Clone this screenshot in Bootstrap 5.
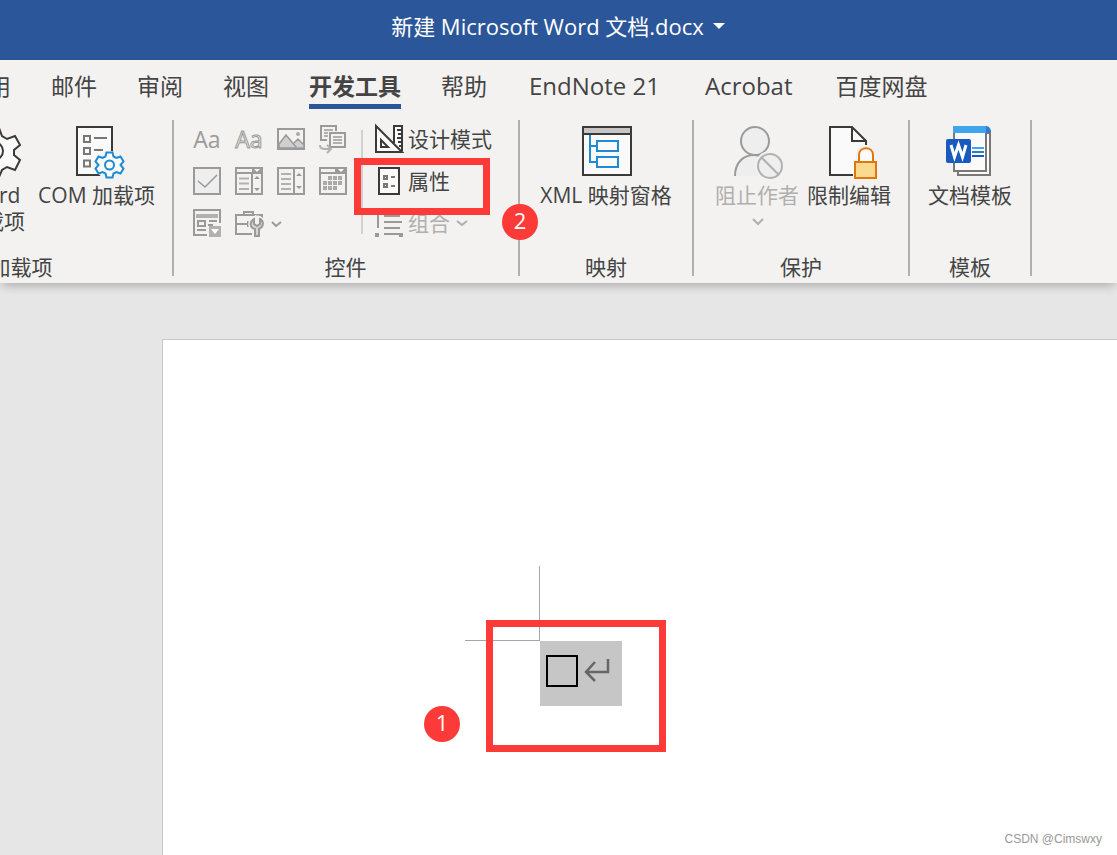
<!DOCTYPE html>
<html lang="zh-CN">
<head>
<meta charset="utf-8">
<meta name="viewport" content="width=device-width, initial-scale=1">
<title>新建 Microsoft Word 文档.docx</title>
<link href="https://cdn.jsdelivr.net/npm/bootstrap@5.3.0/dist/css/bootstrap.min.css" rel="stylesheet">
<style>
:root { --ink:#444; --edge:#3b3a39; --dim:#9a9a9a; --off:#b1afad; --blue:#2b579a; --accent:#1e8bd4; --alert:#fc3a38; }
body { font-family:"Open Sans","Noto Sans CJK SC",sans-serif; color:var(--ink); background:#e6e6e6; overflow-x:hidden; }
svg { display:block; flex:none; overflow:visible; }
button { background:none; border:0; padding:0; color:inherit; }
.titlebar { background:var(--blue); height:60px; font-size:22px; line-height:28px; padding-bottom:8px; }
.ribbon { background:#f3f2f0; box-shadow:0 4px 10px -2px rgba(0,0,0,.28); z-index:1; }
.tabs { gap:40px; margin-left:-35px; height:60px; font-size:23px; line-height:32px; white-space:nowrap; }
.tabs a { color:var(--ink); text-decoration:none; padding-top:10px; height:49px; }
.tabs a.active { font-weight:700; border-bottom:5px solid var(--blue); }
.tabs .latin { padding-left:2px; padding-right:3px; font-size:24px; }
.groups { margin-left:-130px; padding-bottom:7px; font-size:21px; line-height:26px; white-space:nowrap; }
.group { border-right:2px solid #b2b0ae; height:156px; flex:none; }
.caption-line { line-height:18px; }
.g-addins { width:304px; }
.addins { gap:13px; padding-right:17px; }
.g-controls { width:346px; padding-left:19px; }
.g-map { width:174px; }
.g-protect { width:216px; }
.g-template { width:122px; }
.big { padding-top:5px; }
.big svg.pic { margin-bottom:5px; }
.off, .off:disabled { color:var(--off); }
.picker { display:grid; grid-template-columns:repeat(4,28px); gap:14px; padding-top:5px; }
.glyph, .glyph:disabled { font-size:23px; line-height:28px; height:28px; color:var(--dim); }
.glyph.hollow { color:#f3f2f0; -webkit-text-stroke:1px var(--dim); }
.rule { width:2px; height:104px; background:#d2d0ce; margin:10px 12px 0 14px; }
.cmds { gap:14px; padding-top:5px; }
.cmds button { height:28px; gap:5px; }
.frame { position:absolute; border:7px solid var(--alert); pointer-events:none; z-index:2; }
.bubble { position:absolute; width:36px; height:36px; background:var(--alert); color:#fff; font-size:22px; line-height:32px; z-index:3; }
.frame-prop { left:-21px; top:-9px; width:136px; height:57px; }
.bubble-2 { right:-20px; top:84px; }
.sheet { background:#fff; border:solid #c6c6c6; border-width:1px 0 0 1px; margin:56px 0 0 162px; padding:226px 0 102px 302px; }
.corner { width:75px; height:75px; border:solid #a5a5a5; border-width:0 1px 1px 0; }
.picked { width:82px; height:65px; background:#c6c6c6; margin-top:75px; padding:0 12px 5px 6px; }
.picked input { appearance:none; width:32px; height:32px; border:2px solid #000; margin:0; }
.frame-doc { left:21px; top:54px; width:180px; height:132px; }
.bubble-1 { left:-41px; top:140px; }
.credit { position:absolute; right:15px; bottom:7px; font:12px/18px "Liberation Sans",sans-serif; color:#999; }
</style>
</head>
<body class="d-flex flex-column min-vh-100">
<header class="titlebar d-flex justify-content-center align-items-center text-white">
  <button class="d-flex align-items-center gap-2">新建 Microsoft Word 文档.docx
    <svg width="14" height="8" viewBox="0 0 14 8"><path d="M1 1h12l-6 6z" fill="#fff"/></svg></button>
</header>

<div class="ribbon position-relative">
  <div class="overflow-hidden">
  <nav class="tabs d-flex">
    <a href="#">引用</a><a href="#">邮件</a><a href="#">审阅</a><a href="#">视图</a><a href="#" class="active">开发工具</a><a href="#">帮助</a><a href="#" class="latin">EndNote 21</a><a href="#" class="latin">Acrobat</a><a href="#">百度网盘</a>
  </nav>
  <div class="groups d-flex">
    <section class="group g-addins d-flex flex-column justify-content-between">
      <div class="addins d-flex justify-content-end align-items-start">
        <button class="big d-flex flex-column align-items-center">
          <svg class="pic" width="52" height="52" viewBox="0 0 52 52" fill="#fafafa" stroke="#3b3a39" stroke-width="2"><path d="M20 3h11l3 8 5 3 8-3 5 9-6 5v5l6 5-5 10-8-3-5 3-3 7H20l-2-7-5-3-8 3-5-9 6-6v-5l-6-5 5-9 8 3 5-3z"/><circle cx="26" cy="26" r="9"/></svg>
          <span>Word</span><span>加载项</span>
        </button>
        <button class="big d-flex flex-column align-items-center">
          <svg class="pic" width="52" height="52" viewBox="0 0 52 52" fill="none" stroke-width="2"><path d="M6 2h35v48H6z" fill="#fafafa" stroke="#3b3a39"/><path d="M13 11h6v6h-6zM13 23h6v6h-6zM13 35.500h6v6h-6zM23 13h13M23 25h9" stroke="#797775"/><circle cx="38.500" cy="40" r="14" fill="#f3f2f0"/><path d="M35.500 27.500h6l1 4 3 1.500 4-1.500 3 5-3 3.500 3 3.500-3 5-4-1.500-3 1.500-1 4h-6l-1-4-3-1.500-4 1.500-3-5 3-3.500-3-3.500 3-5 4 1.500 3-1.500z" fill="#fafafa" stroke="#1e8bd4"/><circle cx="38.500" cy="40" r="4.500" stroke="#1e8bd4"/></svg>
          <span>COM 加载项</span>
        </button>
      </div>
      <div class="caption-line text-center">加载项</div>
    </section>

    <section class="group g-controls d-flex flex-column justify-content-between position-relative">
      <div class="d-flex">
        <div class="picker">
          <button disabled class="glyph" aria-label="格式文本">Aa</button>
          <button disabled class="glyph hollow" aria-label="纯文本">Aa</button>
          <button disabled aria-label="图片"><svg width="28" height="28" viewBox="0 0 28 28" fill="none" stroke="#9a9a9a" stroke-width="2"><path d="M1 4h26v20H1z"/><path d="M2 19l7-9 11 13H2zM17 18l4-4 6 6v3h-6" fill="#cfcfcf" stroke-width="1.500"/><circle cx="21" cy="9" r="2" fill="#aaa" stroke="none"/></svg></button>
          <button disabled aria-label="构建基块库"><svg width="28" height="28" viewBox="0 0 28 28" fill="none" stroke="#9a9a9a" stroke-width="2"><path d="M8 15H2V1h15v5"/><path d="M11 8h15v14H11z"/><path d="M5 5h9M5 8h4M5 11h4M14 12h9M14 15h9M14 18h9" stroke-width="1.500"/><path d="M1 20c0 4 2 4 10 4M8 20l4 4-4 4" stroke="#b1b1b1"/></svg></button>
          <button disabled aria-label="复选框"><svg width="28" height="28" viewBox="0 0 28 28" fill="#eee" stroke="#9a9a9a" stroke-width="2"><path d="M1 1h26v26H1z"/><path d="m5 14 7 6L24 8" fill="none" stroke-width="1.500"/></svg></button>
          <button disabled aria-label="组合框"><svg width="28" height="28" viewBox="0 0 28 28" fill="none" stroke="#9a9a9a" stroke-width="2"><path d="M1 1h26v26H1zM1 6h26M17 6v21"/><path d="M4 11.500h10M4 16.500h10M4 22h10" stroke="#b1b1b1"/><path d="M17 1h10v5H17zM19 12l3-3 3 3zM19 21l3 3 3-3z" fill="#9a9a9a" stroke="none"/><path d="m19 2 3 3 3-3z" fill="#fff" stroke="none"/></svg></button>
          <button disabled aria-label="下拉列表"><svg width="28" height="28" viewBox="0 0 28 28" fill="none" stroke="#9a9a9a" stroke-width="2"><path d="M1 1h26v26H1zM17 1v26"/><path d="M4 7h10M4 12h10M4 17h10M4 22h10" stroke="#b1b1b1"/><path d="m19 9 3-3 3 3zM19 19l3 3 3-3z" fill="#9a9a9a" stroke="none"/></svg></button>
          <button disabled aria-label="日期选取器"><svg width="28" height="28" viewBox="0 0 28 28" fill="none" stroke="#9a9a9a" stroke-width="2"><path d="M1 1h26v26H1zM1 6h26"/><path d="M17 1h10v5H17z" fill="#9a9a9a"/><path d="m19 2 3 3 3-3z" fill="#fff" stroke="none"/><path d="M9 11h14M4 16h19M4 21h14" stroke="#aaa" stroke-width="4" stroke-dasharray="4 1"/></svg></button>
          <button disabled aria-label="重复分区"><svg width="28" height="28" viewBox="0 0 28 28" fill="none" stroke="#9a9a9a" stroke-width="2"><path d="M14 26H1V1h26v13M4 21h9M16 12h8" stroke-width="2"/><path d="M3 7h22" stroke="#b1b1b1" stroke-width="4"/><path d="M5 12h7v5H5zM15 16h5"/><path d="M16 17h12v11H16z" fill="#b1b1b1" stroke="none"/><path d="M18 20h8l-4 5z" fill="#fff" stroke="none"/></svg></button>
          <button disabled aria-label="旧式工具"><svg width="28" height="28" viewBox="0 0 28 28" fill="none" stroke="#9a9a9a" stroke-width="2"><path d="M9 6V3h9v3M27 9V6H1v19h16M1 15h11M13 12v6"/><path d="M19 10c-5 3-4 9 1 10v7h4v-7c5-2 5-8 1-10v5l-3 2-3-2z" fill="#d5d5d5" stroke="#f3f2f0" stroke-width="5"/><path d="M19 10c-5 3-4 9 1 10v7h4v-7c5-2 5-8 1-10v5l-3 2-3-2z" fill="#d5d5d5"/></svg></button>
          <svg width="28" height="28" viewBox="0 0 28 28" fill="none" stroke="#9a9a9a" stroke-width="2"><path d="m-5 13 4 4 5-4"/></svg>
        </div>
        <div class="rule"></div>
        <div class="cmds d-flex flex-column align-items-start">
          <button class="d-flex align-items-center"><svg width="28" height="28" viewBox="0 0 28 28" fill="#fafafa" stroke="#3b3a39" stroke-width="2"><path d="M19 18V1h8v25M27 5h-5M27 9h-4M27 13h-5M27 17h-4M27 21h-3"/><path d="M1 1v26h26z"/><path d="M6 15v7h7z"/></svg>设计模式</button>
          <div class="position-relative"><button class="d-flex align-items-center"><svg width="28" height="28" viewBox="0 0 28 28" fill="none" stroke-width="2"><path d="M4 1h20v26H4z" fill="#fafafa" stroke="#3b3a39"/><path d="M9 9h3v3H9zM9 17h3v3H9zM16 10h4M16 19h4" stroke="#797775"/></svg>属性</button><div class="frame frame-prop"></div></div>
          <button disabled class="off d-flex align-items-center"><svg width="28" height="28" viewBox="0 0 28 28" fill="none" stroke="#9a9a9a" stroke-width="2"><path d="M3 2v17M3 3h6M9 7h16M9 13h18M9 19h16M9 25h15"/><path d="M0 24h4v4H0zM24 24h4v4h-4z" fill="#9a9a9a" stroke="none"/></svg>组合<svg width="14" height="12" viewBox="0 0 14 12" fill="none" stroke="#b1afad" stroke-width="2"><path d="m2 4 5 4 5-4"/></svg></button>
        </div>
      </div>
      <div class="caption-line text-center pe-3 me-1">控件</div>
      <div class="bubble bubble-2 rounded-circle text-center">2</div>
    </section>

    <section class="group g-map d-flex flex-column justify-content-between align-items-center">
      <button class="big d-flex flex-column align-items-center"><svg class="pic" width="52" height="52" viewBox="0 0 52 52" fill="#fafafa" stroke="#3b3a39" stroke-width="2"><path d="M3 2h48v48H3z"/><path d="M3 2h48v7H3z" fill="#c8c6c4"/><path d="M10 10v27h6M10 21h6M17 16h21v10H17zM17 32h21v10H17z" stroke="#1e8bd4"/></svg>XML 映射窗格</button>
      <div class="caption-line">映射</div>
    </section>

    <section class="group g-protect d-flex flex-column justify-content-between align-items-center">
      <div class="d-flex align-items-start gap-2 ps-1">
        <button disabled class="big off d-flex flex-column align-items-center"><svg class="pic" width="52" height="52" viewBox="0 0 52 52" fill="#eee" stroke="#9a9a9a" stroke-width="2"><path d="M4 51c0-14 9-21 20-21s14 6 18 21" stroke="none"/><path d="M4 51c0-14 9-21 19-21 5 0 8 1 11 3" fill="none"/><circle cx="24" cy="16" r="14"/><circle cx="39" cy="41" r="15" fill="#f3f2f0" stroke="none"/><circle cx="39" cy="41" r="12" stroke="#b1b1b1"/><path d="m30 32 18 18" stroke="#b1b1b1"/></svg>阻止作者<svg width="16" height="26" viewBox="0 0 16 26" fill="none" stroke="#b1afad" stroke-width="2"><path d="m4 11 5 5 5-5"/></svg></button>
        <button class="big d-flex flex-column align-items-center"><svg class="pic" width="52" height="52" viewBox="0 0 52 52" fill="#fafafa" stroke="#3b3a39" stroke-width="2"><path d="M30 50H7V2h22l14 14v12H29z" stroke="none"/><path d="M30 50H7V2h22l14 14v4M29 2v14h14"/><path d="M36 36v-6c0-9 14-9 14 0v6" fill="#f3f2f0" stroke="#f3f2f0" stroke-width="6"/><path d="M36 36v-6c0-9 14-9 14 0v6" fill="#fafafa" stroke="#e3750b"/><path d="M32 37h21v16H32z" fill="#f8db8f" stroke="#e3750b"/></svg>限制编辑</button>
      </div>
      <div class="caption-line">保护</div>
    </section>

    <section class="group g-template d-flex flex-column justify-content-between align-items-center">
      <button class="big d-flex flex-column align-items-center"><svg class="pic" width="52" height="52" viewBox="0 0 52 52" fill="#fafafa" stroke="#797775" stroke-width="2"><path d="M14 8h32v42H14z"/><path d="M10 6h32v40H10z"/><path d="M9 1h33c3 0 5 3 5 6l-3 1H9z" fill="#2b7cd3" stroke="none"/><path d="M9 1h33v7H9z" fill="#41a5ee" stroke="none"/><path d="M28 23h12" stroke="#41a5ee"/><path d="M28 27h12" stroke="#2b7cd3"/><path d="M28 31h12" stroke="#185abd"/><rect x="2" y="14" width="25" height="24" rx="2" fill="#185abd" stroke="none"/><path d="m7 20 3.500 12 4-12 4 12 3.500-12" fill="none" stroke="#fff" stroke-width="3"/></svg>文档模板</button>
      <div class="caption-line">模板</div>
    </section>
  </div>
  </div>
</div>

<main class="sheet flex-grow-1 position-relative">
  <div class="d-flex position-relative">
    <div class="corner"></div>
    <div class="picked d-flex align-items-center justify-content-between">
      <input type="checkbox" aria-label="复选框内容控件">
      <svg width="26" height="28" viewBox="0 0 26 28" fill="none" stroke="#666" stroke-width="2.500"><path d="M24 2v13H2M11 5 2 15l9 9"/></svg>
    </div>
    <div class="frame frame-doc"></div>
    <div class="bubble bubble-1 rounded-circle text-center">1</div>
  </div>
  <div class="credit">CSDN @Cimswxy</div>
</main>
<script src="https://cdn.jsdelivr.net/npm/bootstrap@5.3.0/dist/js/bootstrap.bundle.min.js"></script>
</body>
</html>
